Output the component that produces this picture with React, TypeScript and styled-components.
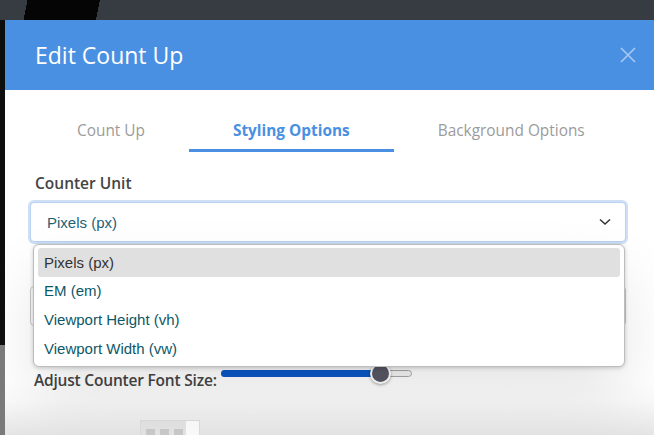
import React from 'react'
import styled, { createGlobalStyle } from 'styled-components'

const GlobalStyle = createGlobalStyle`
  html, body {
    margin: 0;
    padding: 0;
    overflow: hidden;
  }
  body {
    font-family: "Open Sans", "Noto Sans", sans-serif;
  }
`

const units = [
  'Pixels (px)',
  'EM (em)',
  'Viewport Height (vh)',
  'Viewport Width (vw)',
]

const tabs = ['Count Up', 'Styling Options', 'Background Options']

const App: React.FC = () => {
  const fontSize = 84 // percent of slider range

  return (
    <>
      <GlobalStyle />
      <Backdrop>
        <Modal>
          <Header>
            <Title>Edit Count Up</Title>
            <CloseButton aria-label="Close">
              <svg width="18" height="18" viewBox="0 0 18 18">
                <path d="M2 2L16 16M16 2L2 16" stroke="#a9c8f1" strokeWidth="1.6" />
              </svg>
            </CloseButton>
          </Header>
          <Body>
            <Tabs>
              {tabs.map((t, i) => (
                <Tab key={t} $active={i === 1}>
                  {t}
                </Tab>
              ))}
            </Tabs>

            <Field>
              <Label>Counter Unit</Label>
              <SelectWrap>
                <SelectBox $focused>
                  <SelectValue>Pixels (px)</SelectValue>
                  <svg width="12" height="8" viewBox="0 0 12 8">
                    <path d="M1 1.5L6 6L11 1.5" fill="none" stroke="#333" strokeWidth="1.5" />
                  </svg>
                </SelectBox>
                <Dropdown>
                  {units.map((u, i) => (
                    <Option key={u} $selected={i === 0}>
                      {u}
                    </Option>
                  ))}
                </Dropdown>
              </SelectWrap>
            </Field>

            <Field>
              <Label>Counter Font Weight</Label>
              <SelectBox>
                <SelectValue>Normal</SelectValue>
              </SelectBox>
            </Field>

            <SliderRow>
              <Label>Adjust Counter Font Size:</Label>
              <Track>
                <Fill style={{ width: `${fontSize}%` }} />
                <Thumb style={{ left: `${fontSize}%` }} />
              </Track>
            </SliderRow>

            <Preview>
              <PreviewDots>
                <Dot />
                <Dot />
                <Dot />
              </PreviewDots>
              <PreviewEnd />
            </Preview>
          </Body>
        </Modal>
      </Backdrop>
    </>
  )
}

const Backdrop = styled.div`
  width: 654px;
  height: 435px;
  box-sizing: border-box;
  padding: 20px 0 0 5px;
  background:
    linear-gradient(101deg, transparent 0 27px, #050505 27px 98px, transparent 98px) top left / 100% 20px no-repeat,
    linear-gradient(to bottom, #363c42 0 20px, #0e0e0e 20px 345px, #7a7a7a 345px);
  display: flex;
`

const Modal = styled.div`
  flex: 1;
  min-width: 0;
  display: flex;
  flex-direction: column;
  background: #fff;
  overflow: hidden;
`

const Header = styled.div`
  height: 70px;
  flex-shrink: 0;
  background: #4a90e2;
  display: flex;
  align-items: center;
  justify-content: space-between;
  padding: 0 17px 0 30px;
`

const Title = styled.h1`
  margin: 0;
  font-size: 23px;
  font-weight: 400;
  color: #fff;
`

const CloseButton = styled.button`
  border: none;
  background: none;
  padding: 0;
  display: flex;
  cursor: pointer;
`

const Body = styled.div`
  flex: 1;
  padding: 20px 28px 0 25px;
  overflow: hidden;
  background: linear-gradient(to bottom, #fff 0 290px, #fafafa 310px, #e4e4e4 100%);
`

const Tabs = styled.div`
  display: flex;
  padding-left: 3px;
  margin-bottom: 20px;
`

const Tab = styled.div<{ $active?: boolean }>`
  flex-shrink: 0;
  white-space: nowrap;
  padding: 10px 44px 8px;
  font-size: 15.4px;
  line-height: 21px;
  font-weight: ${(p) => (p.$active ? 700 : 400)};
  color: ${(p) => (p.$active ? '#4a90e2' : '#9b9b9b')};
  border-bottom: 3px solid ${(p) => (p.$active ? '#4a90e2' : 'transparent')};
`

const Field = styled.div`
  display: flex;
  flex-direction: column;
  margin-bottom: 14px;
`

const Label = styled.label`
  font-size: 15.5px;
  line-height: 22px;
  font-weight: 600;
  color: #444;
  margin: 0 0 8px 5px;
  white-space: nowrap;
`

const SelectWrap = styled.div`
  position: relative;
`

const SelectBox = styled.div<{ $focused?: boolean }>`
  height: 40px;
  box-sizing: border-box;
  border: 1px solid ${(p) => (p.$focused ? '#b9d3f3' : '#c9c9c9')};
  border-radius: 4px;
  display: flex;
  align-items: center;
  justify-content: space-between;
  padding: 0 14px 0 16px;
  background: #fff;
  box-shadow: ${(p) => (p.$focused ? '0 0 0 2px #cfe0f6' : 'none')};
`

const SelectValue = styled.span`
  font-family: "Liberation Sans", Arial, sans-serif;
  font-size: 15px;
  color: #1e6276;
`

const Dropdown = styled.div`
  position: absolute;
  top: 42px;
  left: 3px;
  right: 1px;
  z-index: 2;
  background: #fff;
  border: 1px solid #bdbdbd;
  border-radius: 6px;
  padding: 3px 4px 4px;
  box-shadow: 0 1px 4px rgba(0, 0, 0, 0.2), 0 30px 60px rgba(0, 0, 0, 0.1);
`

const Option = styled.div<{ $selected?: boolean }>`
  height: 28.6px;
  display: flex;
  align-items: center;
  padding: 0 6px;
  border-radius: 3px;
  font-family: "Liberation Sans", Arial, sans-serif;
  font-size: 15px;
  background: ${(p) => (p.$selected ? '#e0e0e0' : 'transparent')};
  color: ${(p) => (p.$selected ? '#333' : '#0d5868')};
`

const SliderRow = styled.div`
  display: flex;
  align-items: flex-start;
  gap: 4px;
  margin-top: 43px;

  ${Label} {
    margin: 0 0 0 4px;
    letter-spacing: -0.2px;
  }
`

const Track = styled.div`
  position: relative;
  width: 191px;
  height: 7px;
  box-sizing: border-box;
  margin-top: 1px;
  border: 1px solid #a8a8a8;
  border-radius: 4px;
  background: #f4f4f4;
`

const Fill = styled.div`
  position: absolute;
  left: -1px;
  top: -1px;
  height: 7px;
  border-radius: 4px;
  background: #0a57c6;
`

const Thumb = styled.div`
  position: absolute;
  top: 50%;
  width: 17px;
  height: 17px;
  margin: -11px 0 0 -10px;
  border-radius: 50%;
  background: #585865;
  border: 2px solid #fff;
  box-shadow: 0 1px 3px rgba(0, 0, 0, 0.35);
`

const Preview = styled.div`
  display: flex;
  width: 60px;
  height: 24px;
  margin: 29px 0 0 110px;
  border: 1px solid #dcdcdc;
  border-bottom: none;
  box-sizing: border-box;
`

const PreviewDots = styled.div`
  flex: 1;
  display: flex;
  gap: 5px;
  padding: 8px 0 0 5px;
  background: #e3e3e3;
`

const Dot = styled.div`
  width: 9px;
  height: 9px;
  background: #c9c9c9;
`

const PreviewEnd = styled.div`
  width: 13px;
  background: #fbfbfb;
`

export default App
